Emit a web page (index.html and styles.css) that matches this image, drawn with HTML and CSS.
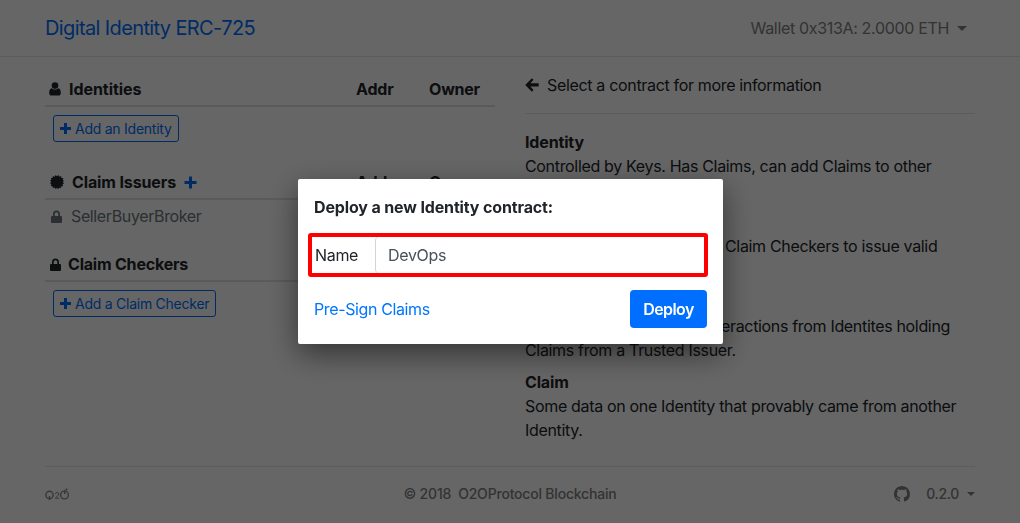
FILE: index.html
```html
<!DOCTYPE html>
<html lang="en">
<head>
<meta charset="utf-8">
<title>Digital Identity ERC-725</title>
<link rel="stylesheet" href="styles.css">
</head>
<body>
<div class="page">
  <nav class="navbar">
    <a class="brand">Digital Identity ERC-725</a>
    <span class="wallet">Wallet 0x313A: 2.0000 ETH <i class="caret"></i></span>
  </nav>
  <main class="columns">
    <div class="contracts">
      <section class="group group-identities">
        <header class="group-head">
          <svg class="icon-user" viewBox="0 0 12 14" width="12" height="14"><circle cx="6" cy="3.6" r="3.3"/><path d="M2.9 6.2C.8 6.5.2 8.6.2 10.9c0 1.700.9 2.600 2.300 2.600h7c1.400 0 2.300-.9 2.300-2.600 0-2.300-.6-4.400-2.700-4.700C8.300 7.100 7.300 7.600 6 7.600S3.700 7.100 2.900 6.200z"/></svg>
          <span class="title t-identities">Identities</span><span class="col-addr">Addr</span><span class="col-owner">Owner</span>
        </header>
        <button class="btn-add add-identity"><svg viewBox="0 0 11 11" width="11" height="11"><path d="M4 0h3v4h4v3H7v4H4V7H0V4h4z"/></svg><span>Add an Identity</span></button>
      </section>
      <section class="group group-issuers">
        <header class="group-head">
          <svg class="icon-cert" viewBox="0 0 14 14" width="14" height="14"><path d="M7 1.300L8.500 0l.8 1.700 1.900-.7.200 1.900 2 .2-.7 1.800L14 5.800 12.800 7 14 8.400l-1.500.9.600 1.900-1.900.1-.2 1.900-1.800-.6-.8 1.500L7 12.900 5.500 14l-.8-1.500-1.900.6-.2-1.900-1.900-.1.700-1.900L0 8.300 1.200 7 0 5.600l1.500-.8L.8 3l1.900-.2.200-1.900 1.800.8L5.600 0z"/></svg>
          <span class="title t-issuers">Claim Issuers</span>
          <svg class="icon-plus" viewBox="0 0 13 13" width="13" height="13"><path d="M5 .5h3V5h4.500v3H8v4.500H5V8H.5V5H5z"/></svg>
          <span class="col-addr">Addr</span><span class="col-owner">Owner</span>
        </header>
        <div class="item"><svg viewBox="0 0 11 13" width="11" height="13"><path fill-rule="evenodd" d="M2 6V4a3.500 3.500 0 0 1 7 0v2h1q1 0 1 1v5q0 1-1 1H1q-1 0-1-1V7q0-1 1-1zm1.700 0h3.600V4a1.800 1.800 0 0 0-3.600 0z"/></svg><span>SellerBuyerBroker</span></div>
      </section>
      <section class="group">
        <header class="group-head">
          <svg class="icon-lock" viewBox="0 0 11 13" width="11" height="13"><path fill-rule="evenodd" d="M2 6V4a3.500 3.500 0 0 1 7 0v2h1q1 0 1 1v5q0 1-1 1H1q-1 0-1-1V7q0-1 1-1zm1.700 0h3.600V4a1.800 1.800 0 0 0-3.600 0z"/></svg>
          <span class="title t-checkers">Claim Checkers</span>
        </header>
        <button class="btn-add add-checker"><svg viewBox="0 0 11 11" width="11" height="11"><path d="M4 0h3v4h4v3H7v4H4V7H0V4h4z"/></svg><span>Add a Claim Checker</span></button>
      </section>
    </div>
    <div class="info">
      <div class="hint"><svg viewBox="0 0 14 14" width="14" height="14"><path d="M6.900.2l1.600 1.600L5.400 5.200h8.300v3.400H5.400l3.100 3.400-1.600 1.700L.2 6.900z"/></svg><span>Select a contract for more information</span></div>
      <dl class="terms">
        <dt>Identity</dt>
        <dd><span>Controlled by Keys. Has Claims, can add Claims to other</span><br>Identities.</dd>
        <dt>Claim Issuer</dt>
        <dd><span class="lead">Identity trusted by</span><span>Claim Checkers to issue valid</span><br>Claims.</dd>
        <dt>Claim Checker</dt>
        <dd><span class="lead lead-checker">Contract that allows int</span><span>eractions from Identites holding</span><br><span>Claims from a Trusted Issuer.</span></dd>
        <dt>Claim</dt>
        <dd><span>Some data on one Identity that provably came from another</span><br>Identity.</dd>
      </dl>
    </div>
  </main>
  <footer class="footer">
    <svg class="logo" viewBox="0 0 25 14" width="25" height="14"><circle cx="4.500" cy="8" r="3.700"/><path d="M4.500 9v4M19.700 3.500V7M20.500 3.200l1.800-1.500"/><circle cx="19.500" cy="8" r="3.900"/><path class="two" d="M10.300 7q.2-1.500 1.900-1.500 1.700 0 1.700 1.500 0 1-3.600 4.200h4"/></svg>
    <span class="copy">© 2018 &nbsp;O2OProtocol Blockchain</span>
    <span class="version"><svg viewBox="0 0 16 16" width="16" height="16"><path d="M8 0C3.580 0 0 3.580 0 8c0 3.540 2.290 6.530 5.470 7.590.4.070.55-.17.55-.38 0-.19-.01-.82-.01-1.490-2.010.37-2.530-.49-2.690-.94-.09-.23-.48-.94-.82-1.130-.28-.15-.68-.52-.01-.53.63-.01 1.080.58 1.230.82.72 1.210 1.870.87 2.330.66.07-.52.28-.87.51-1.070-1.780-.2-3.640-.89-3.640-3.950 0-.87.31-1.590.82-2.150-.08-.2-.36-1.020.08-2.120 0 0 .67-.21 2.200.82.64-.18 1.320-.27 2-.27s1.360.09 2 .27c1.530-1.040 2.200-.82 2.200-.82.44 1.100.16 1.920.08 2.120.51.56.82 1.270.82 2.150 0 3.070-1.870 3.750-3.650 3.950.29.25.54.73.54 1.480 0 1.070-.01 1.930-.01 2.200 0 .21.15.46.55.38A8.010 8.010 0 0 0 16 8c0-4.420-3.580-8-8-8z"/></svg><span>0.2.0</span><i class="caret"></i></span>
  </footer>
</div>
<div class="backdrop">
  <div class="modal">
    <h1 class="modal-title"><span>Deploy a new Identity contract:</span></h1>
    <div class="field"><label>Name</label><div class="input">DevOps</div></div>
    <div class="actions"><a class="presign">Pre-Sign Claims</a><button class="deploy">Deploy</button></div>
  </div>
</div>
</body>
</html>
```
FILE: styles.css
```css
* { box-sizing: border-box; }
body { margin: 0; background: #fff; color: #212529; font: 16px/24px Inter, "Liberation Sans", sans-serif; letter-spacing: -0.33px; overflow: hidden; }
button { font: inherit; letter-spacing: inherit; margin: 0; }
svg { display: block; flex: none; fill: currentColor; }
.page { height: 523px; display: flex; flex-direction: column; }
.navbar { height: 57px; flex: none; padding: 0 53px 0 45px; display: flex; justify-content: space-between; align-items: center; border-bottom: 1px solid #e5e5e5; }
.brand { font-size: 20px; color: #006eff; letter-spacing: -0.62px; }
.wallet { color: #808080; display: flex; align-items: center; gap: 8px; }
.caret { display: block; border: 5px solid transparent; border-top-color: currentColor; border-bottom: 0; }
.columns { display: flex; gap: 30px; padding: 0 45px; height: 409px; flex: none; }
.contracts { width: 450px; padding-top: 16px; }
.group-identities { height: 93px; }
.group-issuers { height: 82px; }
.group-head { height: 34px; border-bottom: 2px solid #dee2e6; display: flex; align-items: center; padding-left: 4px; font-weight: 700; letter-spacing: -0.2px; }
.title { margin-left: 8px; }
.t-identities { letter-spacing: -0.05px; }
.t-issuers { margin-left: 8px; letter-spacing: -0.12px; }
.icon-cert { margin-left: 1px; }
.icon-lock { margin-left: 1px; }
.t-checkers { margin-left: 7px; }
.icon-plus { margin-left: 8px; color: #006eff; }
.col-addr { margin-left: auto; width: 73px; }
.col-owner { width: 66px; }
.btn-add { margin: 8px 0 0 8px; height: 27px; padding: 0 6px; border: 1px solid #006eff; border-radius: 3px; background: none; color: #006eff; font-size: 14px; line-height: 21px; letter-spacing: -0.25px; display: flex; align-items: center; gap: 4px; white-space: nowrap; }
.add-identity { width: 126px; }
.add-checker { width: 163px; }
.item { height: 32px; padding-left: 6px; display: flex; align-items: center; gap: 9px; color: #6c757d; letter-spacing: -0.37px; }
.info { width: 450px; padding-top: 16px; white-space: nowrap; }
.hint { height: 41px; padding-bottom: 16px; border-bottom: 1px solid #e5e5e5; display: flex; align-items: center; gap: 8px; }
.terms { margin: 16px 0 0; }
.terms dt { font-weight: 700; letter-spacing: -0.15px; }
.terms dd { margin: 0 0 8px; }
.lead { display: inline-block; width: 200px; }
.lead-checker { width: 196px; }
.footer { margin: 0 45px; height: 57px; border-top: 1px solid #e5e5e5; padding-bottom: 2px; display: grid; grid-template-columns: 1fr auto 1fr; align-items: center; color: #808080; font-size: 14px; font-weight: 500; letter-spacing: -0.2px; }
.logo { fill: none; stroke: #8a8a8a; stroke-width: 1.4; }
.logo .two { stroke-width: 1; }
.version { display: flex; align-items: center; justify-content: flex-end; }
.version > span { margin: 0 8px 0 16px; letter-spacing: -0.35px; }
.footer .caret { border-width: 4px 4px 0; }
.backdrop { position: fixed; inset: 0; background: rgba(0, 0, 0, 0.6); display: flex; justify-content: center; padding-top: 179px; }
.modal { width: 425px; height: 165px; margin-left: 1px; padding: 16px; background: #fff; border-radius: 2px; box-shadow: 0 10px 30px rgba(0, 0, 0, 0.5); }
.modal-title { margin: 0; font-size: 16px; line-height: 24px; font-weight: 700; letter-spacing: -0.14px; }
.field { margin: 14px -1px 0 -6px; width: 400px; height: 44px; border: 4px solid #f00; border-radius: 3px; display: flex; }
.field label { width: 63px; padding: 6px 3px; }
.input { flex: 1; border-left: 1px solid #ced4da; border-radius: 4px; padding: 6px 12px; color: #495057; }
.actions { margin-top: 13px; display: flex; justify-content: space-between; align-items: center; }
.presign { color: #0075ff; letter-spacing: -0.38px; }
.deploy { width: 77px; height: 38px; padding: 0; border: 0; border-radius: 4px; background: #006eff; color: #fff; font-weight: 600; letter-spacing: -0.6px; }
```
